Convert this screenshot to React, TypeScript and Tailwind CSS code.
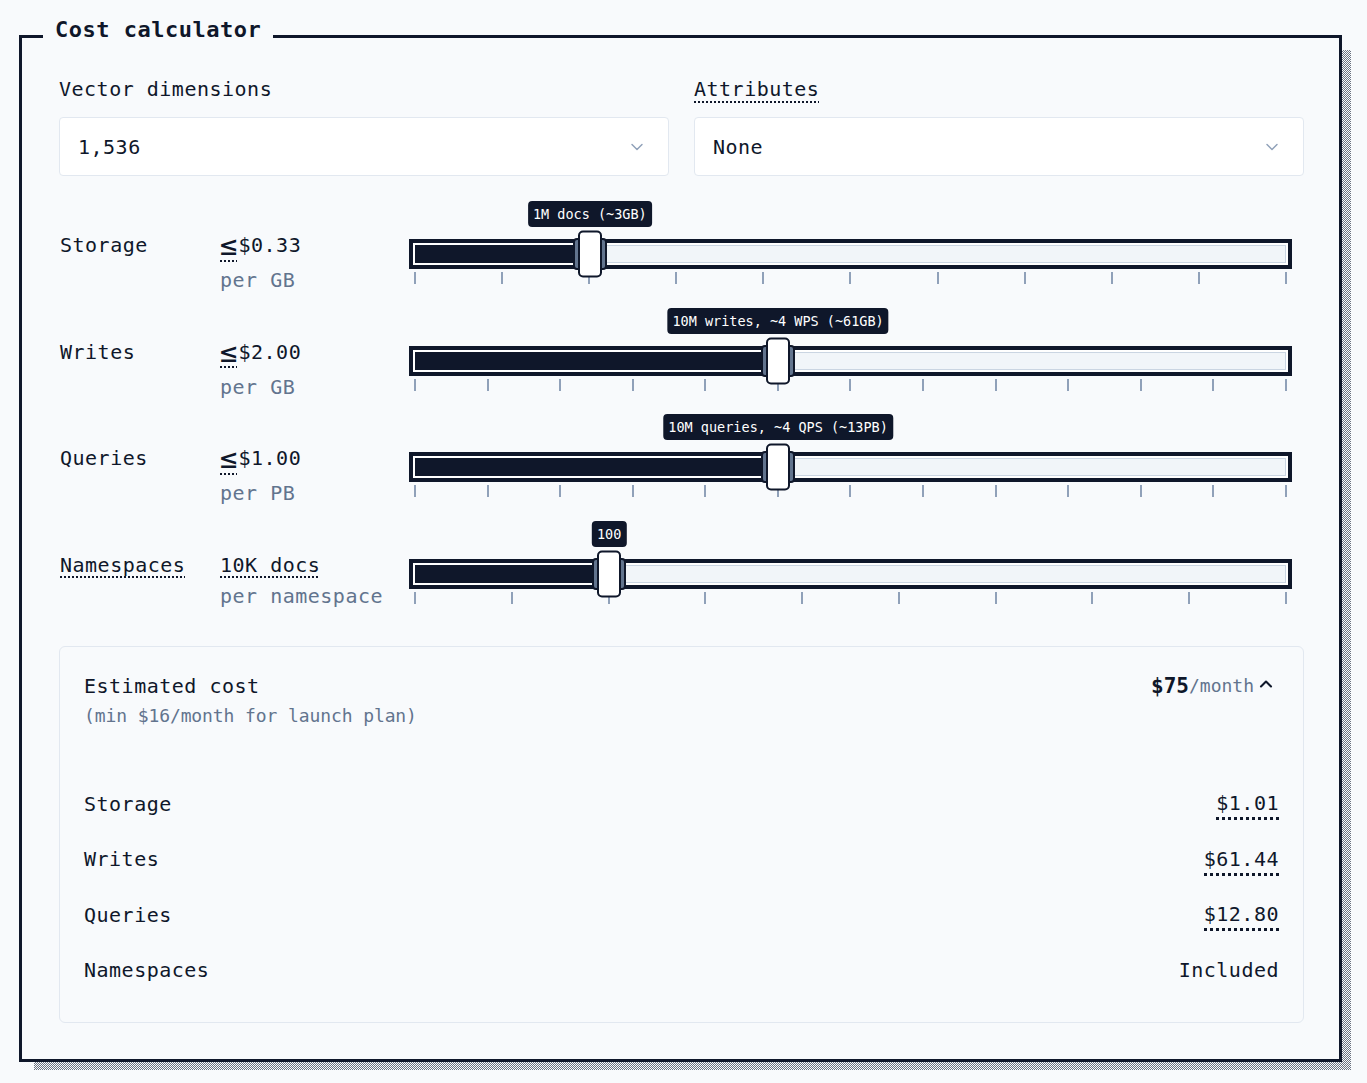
import { ChevronDown, ChevronUp } from "lucide-react";

const sliders = [
  { label: "Storage", price: "$0.33", unit: "per GB", le: true, ticks: 11, value: 2, tip: "1M docs (~3GB)", hint: false },
  { label: "Writes", price: "$2.00", unit: "per GB", le: true, ticks: 13, value: 5, tip: "10M writes, ~4 WPS (~61GB)", hint: false },
  { label: "Queries", price: "$1.00", unit: "per PB", le: true, ticks: 13, value: 5, tip: "10M queries, ~4 QPS (~13PB)", hint: false },
  { label: "Namespaces", price: "10K docs", unit: "per namespace", le: false, ticks: 10, value: 2, tip: "100", hint: true },
];

const costs = [
  { label: "Storage", value: "$1.01" },
  { label: "Writes", value: "$61.44" },
  { label: "Queries", value: "$12.80" },
  { label: "Namespaces", value: "Included" },
];

function Select({ value }: { value: string }) {
  return (
    <div className="h-[59px] bg-white border border-slate-200 rounded-[4px] flex items-center justify-between pl-[18px] pr-[21px]">
      <span>{value}</span>
      <ChevronDown size={20} strokeWidth={1.75} className="text-slate-400" />
    </div>
  );
}

function Slider({ ticks, value, tip }: { ticks: number; value: number; tip: string }) {
  const pct = (value / (ticks - 1)) * 100;
  return (
    <div className="flex-1 pt-[9px]">
      <div className="h-[30px] border-[4px] border-[#0f172a] bg-white p-[2px]">
        <div className="relative h-full bg-slate-100 border border-slate-300">
          <div className="absolute -top-px -bottom-px -left-px bg-[#0f172a]" style={{ width: `${pct}%` }} />
          <div className="absolute top-1/2 w-0 h-0" style={{ left: `${pct}%` }}>
            <div className="absolute left-0 top-0 -translate-x-1/2 -translate-y-1/2 w-[34px] h-[32px] bg-slate-500 border-2 border-[#0f172a] rounded-[4px]" />
            <div className="absolute left-0 top-0 -translate-x-1/2 -translate-y-1/2 w-[24px] h-[47px] bg-white border-2 border-[#0f172a] rounded-[5px]" />
            <div className="absolute left-0 bottom-[27px] -translate-x-1/2 h-[26px] px-[5px] flex items-center whitespace-nowrap bg-[#0f172a] text-white text-[13.5px] font-medium rounded-[4px] tracking-normal">
              {tip}
            </div>
          </div>
        </div>
      </div>
      <div className="mt-[3px] h-[12px] px-[5px] flex justify-between">
        {Array.from({ length: ticks }).map((_, i) => (
          <div key={i} className="w-[2px] h-full bg-slate-400" />
        ))}
      </div>
    </div>
  );
}

const dotted = "underline decoration-dotted decoration-2 underline-offset-[5px]";

export default function App() {
  return (
    <div className="min-h-[1083px] bg-slate-50 pt-[13px] pl-[19px] text-[#0f172a] font-['DejaVu_Sans_Mono',monospace] text-[20px] tracking-[0.5px]">
      <div className="relative w-[1323px]">
        <div className="absolute left-[15px] top-[37px] -right-[9px] -bottom-[8px] bg-[repeating-conic-gradient(#6b7280_0%_25%,transparent_0%_50%)] bg-[length:2px_2px]" />
        <fieldset className="relative w-[1323px] min-w-0 border-[3px] border-[#0f172a] bg-slate-50 pl-[37px] pr-[35px] pt-[15px] pb-[36px]">
          <legend className="-ml-[16px] px-[12px] pt-[2px] pb-[14px] leading-[30px] text-[22px] font-semibold">
            Cost calculator
          </legend>

          <div className="grid grid-cols-2 gap-[25px]">
            <div>
              <div className="leading-[30px] mb-[13px]">Vector dimensions</div>
              <Select value="1,536" />
            </div>
            <div>
              <div className="leading-[30px] mb-[13px]">
                <span className={dotted}>Attributes</span>
              </div>
              <Select value="None" />
            </div>
          </div>

          <div className="mt-[54px] flex flex-col gap-[36.67px] pr-[12px]">
            {sliders.map((s) => (
              <div key={s.label} className="flex items-start h-[70px]">
                <div className="w-[161px] leading-[30px] pl-px">
                  <span className={s.hint ? dotted : ""}>{s.label}</span>
                </div>
                <div className="w-[189px]">
                  <div className="leading-[30px] h-[30px] flex items-center">
                    {s.le ? (
                      <>
                        <span className="text-[29px] leading-[30px] tracking-normal underline decoration-dotted decoration-2 underline-offset-[5px]">≤</span>
                        <span className="ml-[1px]">{s.price}</span>
                      </>
                    ) : (
                      <span className={dotted}>{s.price}</span>
                    )}
                  </div>
                  <div className={`${s.hint ? "leading-[32px]" : "leading-[40px]"} text-slate-500`}>{s.unit}</div>
                </div>
                <Slider ticks={s.ticks} value={s.value} tip={s.tip} />
              </div>
            ))}
          </div>

          <div className="mt-[26px] border border-slate-200 rounded-md px-[24px] pt-[24px] pb-[24px]">
            <div className="flex items-start justify-between">
              <div>
                <div className="leading-[30px] font-medium">Estimated cost</div>
                <div className="leading-[30px] text-[18px] tracking-[-0.1px] text-slate-500">
                  (min $16/month for launch plan)
                </div>
              </div>
              <div className="flex items-center leading-[30px] pr-[3px]">
                <span className="text-[21px] font-bold tracking-normal">$75</span>
                <span className="text-[18px] tracking-normal text-slate-500">/month</span>
                <ChevronUp size={20} strokeWidth={2.5} className="ml-[2px] -mt-[4px]" />
              </div>
            </div>
            <div className="mt-[45px]">
              {costs.map((c) => (
                <div key={c.label} className="h-[55.5px] flex items-center justify-between">
                  <span>{c.label}</span>
                  {c.value === "Included" ? (
                    <span>{c.value}</span>
                  ) : (
                    <span className="inline-block leading-[27px] mt-[3px] border-b-[3px] border-dotted border-[#0f172a]">
                      {c.value}
                    </span>
                  )}
                </div>
              ))}
            </div>
          </div>
        </fieldset>
      </div>
    </div>
  );
}
